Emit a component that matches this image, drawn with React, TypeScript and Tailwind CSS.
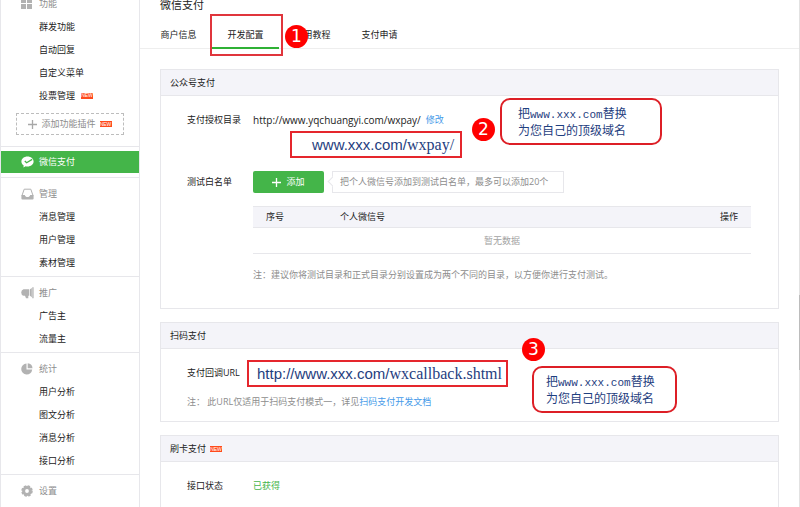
import React from "react";

type NavItem = { label: string; isNew?: boolean };

type NavGroupProps = {
	title: string;
	icon: React.ReactNode;
	items: NavItem[];
	first?: boolean;
	children?: React.ReactNode;
};

const GridIcon = () => (
	<svg width="12" height="12" viewBox="0 0 12 12" fill="#b2b2b2">
		<path d="M0 1h5v4H0zM6 1h5v4H6zM0 6h5v5H0zM6 6h5v5H6z" />
	</svg>
);

const PayIcon = () => (
	<svg width="13" height="12" viewBox="0 0 13 12">
		<path d="M6.500.5C3 .5.4 2.700.4 5.500c0 1.700.9 3.100 2.300 4L2.400 11.600l2.300-1.300c.6.2 1.200.2 1.800.2 3.400 0 6.100-2.200 6.100-5S9.900.5 6.500.5z" fill="#fff" />
		<path d="M3.800 5l1.800 1.700L11.200 3.400" fill="none" stroke="#44b549" strokeWidth="1.300" />
	</svg>
);

const InboxIcon = () => (
	<svg width="13" height="12" viewBox="0 0 13 12">
		<path d="M1 7.500L3.200 1.200h6.600L12 7.500" fill="none" stroke="#b2b2b2" />
		<path d="M.4 7h3.400c.4 1.500 1.400 2 2.700 2s2.300-.5 2.700-2h3.400v3.500q0 1-1 1H1.400q-1 0-1-1z" fill="#b2b2b2" />
	</svg>
);

const HornIcon = () => (
	<svg width="13" height="12" viewBox="0 0 13 12" fill="#b2b2b2">
		<path d="M2.500 2.300h5.500v6.400H7.300v2.600H5L4 8.700H2.500Q.2 8 .2 5.500T2.500 2.300zM8.700 2.500L10.800 1v9.300L8.700 8.500zM11.300.3h1.300v11h-1.300z" />
	</svg>
);

const PieIcon = () => (
	<svg width="12" height="12" viewBox="0 0 12 12" fill="#b2b2b2">
		<path d="M5.500.5A5.500 5.500 0 1 0 11.200 6.500H5.500z" />
		<path d="M6.700.3A5.200 5.200 0 0 1 11.500 5.300H6.700z" />
	</svg>
);

const GearIcon = () => (
	<svg width="12" height="12" viewBox="0 0 12 12">
		<circle cx="6" cy="6" r="3.400" fill="none" stroke="#b2b2b2" strokeWidth="3" />
		<circle cx="6" cy="6" r="5" fill="none" stroke="#b2b2b2" strokeWidth="1.500" strokeDasharray="2.600 1.327" />
	</svg>
);

const PlusIcon = ({ color }: { color: string }) => (
	<svg width="9" height="9" viewBox="0 0 9 9" stroke={color} strokeWidth="1.300">
		<path d="M4.500 0v9M0 4.500h9" />
	</svg>
);

const NewTag = () => (
	<span className="flex h-[6px] w-[12px] items-center justify-center bg-[#ff4a1c] font-['Liberation_Sans'] text-[5px] leading-none text-white">
		NEW
	</span>
);

const NavGroup: React.FC<NavGroupProps> = ({ title, icon, items, first, children }) => {
	return (
		<section className={first ? "" : "border-t border-[#e7e7eb] pt-[5px] pb-[2px]"}>
			<h2 className="flex h-[22px] items-center pl-5 text-[#8d8d8d]">
				<span className="w-[18px]">{icon}</span>
				{title}
			</h2>
			<ul>
				{items.map((item) => (
					<li key={item.label} className="flex h-[23px] items-center gap-[6px] pl-[38px]">
						<a href="#">{item.label}</a>
						{item.isNew && <NewTag />}
					</li>
				))}
			</ul>
			{children}
		</section>
	);
};

const Sidebar = () => {
	return (
		<nav className="w-[140px] shrink-0 border-x border-[#e7e7eb]">
			<NavGroup
				first
				title="功能"
				icon={<GridIcon />}
				items={[{ label: "群发功能" }, { label: "自动回复" }, { label: "自定义菜单" }, { label: "投票管理", isNew: true }]}
			>
				<button className="mt-[6px] mb-[11px] ml-[15px] flex h-[22px] w-[108px] items-center justify-center gap-1 border border-dashed border-[#bdbdbd] text-[#8d8d8d]">
					<PlusIcon color="#a8a8a8" />
					添加功能插件
					<NewTag />
				</button>
			</NavGroup>
			<div className="border-t border-[#e7e7eb] py-1">
				<a href="#" className="flex h-[22px] items-center bg-[#44b549] pl-5 text-white">
					<span className="w-[18px]">
						<PayIcon />
					</span>
					微信支付
				</a>
			</div>
			<NavGroup title="管理" icon={<InboxIcon />} items={[{ label: "消息管理" }, { label: "用户管理" }, { label: "素材管理" }]} />
			<NavGroup title="推广" icon={<HornIcon />} items={[{ label: "广告主" }, { label: "流量主" }]} />
			<NavGroup
				title="统计"
				icon={<PieIcon />}
				items={[{ label: "用户分析" }, { label: "图文分析" }, { label: "消息分析" }, { label: "接口分析" }]}
			/>
			<NavGroup title="设置" icon={<GearIcon />} items={[]} />
		</nav>
	);
};

const StepBadge = ({ step, className }: { step: number; className: string }) => (
	<span
		className={`absolute z-10 flex size-[23px] items-center justify-center rounded-full bg-[#ff0000] font-['DejaVu_Sans'] text-[17px] leading-none text-white ${className}`}
	>
		{step}
	</span>
);

const Callout = ({ className }: { className: string }) => (
	<p
		className={`absolute z-10 h-[47px] rounded-[10px] border-2 border-[#dd1f26] pt-[5px] text-[12px] leading-[17px] whitespace-nowrap text-[#1f4080] ${className}`}
	>
		把<span className="font-['Liberation_Mono'] text-[11px] leading-none">www.xxx.com</span>替换
		<br />
		为您自己的顶级域名
	</p>
);

const UrlMark = ({ host, path, className }: { host: string; path: string; className: string }) => (
	<p
		className={`absolute z-10 h-[27px] border-2 border-[#e5262d] bg-white leading-[23px] whitespace-nowrap text-[#1f4080] ${className}`}
	>
		<span className="font-['Liberation_Sans'] text-[15px]">{host}</span>
		<span className="font-['Liberation_Serif'] text-[16px]">{path}</span>
	</p>
);

const Panel = ({ title, isNew, className, children }: { title: string; isNew?: boolean; className: string; children: React.ReactNode }) => (
	<section className={`relative border border-[#e7e7eb] ${className}`}>
		<h3 className="flex h-[26px] items-center gap-1 border-b border-[#e7e7eb] bg-[#f4f4f9] pt-px pl-[9px]">
			{title}
			{isNew && <NewTag />}
		</h3>
		{children}
	</section>
);

const tabs = ["商户信息", "开发配置", "使用教程", "支付申请"];

const Main = () => {
	return (
		<main className="flex flex-1 flex-col">
			<h1 className="flex h-[23px] items-center pt-[2px] pl-5 text-[11px]">微信支付</h1>
			<div className="relative border-b border-[#eeeeee] pl-[5px]">
				<ul className="flex">
					{tabs.map((tab) => (
						<li key={tab} className="w-[67px]">
							<a
								href="#"
								className={
									tab === "开发配置"
										? "-mb-px flex h-[33px] items-center justify-center border-b-2 border-[#2fb135] pt-[7px]"
										: "flex h-8 items-center justify-center pt-[6px]"
								}
							>
								{tab}
							</a>
						</li>
					))}
				</ul>
				<div className="absolute -top-[2px] left-[70px] h-[42px] w-[73px] border-2 border-[#e0353c]" />
				<StepBadge step={1} className="top-[9px] left-[145px]" />
			</div>

			<div className="mt-5 mr-[21px] ml-5 flex flex-1 flex-col gap-[13px]">
				<Panel title="公众号支付" className="h-[240px]">
					<dl className="grid grid-cols-[66px_1fr] pt-[14px] pr-[27px] pl-[26px]">
						<dt className="h-5 leading-5">支付授权目录</dt>
						<dd className="flex gap-[5px] leading-5">
							<span className="text-[10px]">http://www.yqchuangyi.com/wxpay/</span>
							<a href="#" className="text-[#459ae9]">
								修改
							</a>
						</dd>
						<dt className="mt-[41px] leading-[22px]">测试白名单</dt>
						<dd className="mt-[41px]">
							<div className="flex gap-2">
								<button className="flex h-[22px] w-[71px] items-center justify-center gap-[5px] rounded-[2px] bg-[#44b549] text-white">
									<PlusIcon color="#fff" />
									添加
								</button>
								<div className="relative h-[22px] w-[232px] border border-[#e7e7eb] px-[7px] leading-5 whitespace-nowrap text-[#8d8d8d]">
									把个人微信号添加到测试白名单，最多可以添加20个
									<span className="absolute top-[6px] -left-1 size-[7px] rotate-45 border-b border-l border-[#e7e7eb] bg-white" />
								</div>
							</div>
							<table className="mt-[13px] w-full border-collapse">
								<thead>
									<tr className="h-[21px] border-y border-[#e7e7eb] bg-[#f4f4f9] text-left">
										<th className="w-[74px] pl-[13px] font-normal">序号</th>
										<th className="pl-[13px] font-normal">个人微信号</th>
										<th className="pr-[13px] text-right font-normal">操作</th>
									</tr>
								</thead>
								<tbody>
									<tr className="h-[26px] border-b border-[#e7e7eb]">
										<td colSpan={3} className="text-center text-[#a3a3a3]">
											暂无数据
										</td>
									</tr>
								</tbody>
							</table>
							<p className="mt-[11px] leading-5 text-[#8d8d8d]">注：建议你将测试目录和正式目录分别设置成为两个不同的目录，以方便你进行支付测试。</p>
						</dd>
					</dl>
					<UrlMark host="www.xxx.com/" path="wxpay/" className="top-[61px] left-[129px] w-[172px] pl-5" />
					<StepBadge step={2} className="top-[48px] left-[311px]" />
					<Callout className="top-[28px] left-[339px] w-[162px] pl-4" />
				</Panel>

				<Panel title="扫码支付" className="h-[100px]">
					<div className="pt-[14px] pl-[26px] leading-5">
						<p>支付回调URL</p>
						<p className="mt-[9px] text-[#8d8d8d]">
							注： 此URL仅适用于扫码支付模式一，详见
							<a href="#" className="text-[#459ae9]">
								扫码支付开发文档
							</a>
						</p>
					</div>
					<UrlMark host="http://www.xxx.com/" path="wxcallback.shtml" className="top-[37px] left-[86px] w-[261px] pl-2" />
					<StepBadge step={3} className="top-[15px] left-[361px]" />
					<Callout className="top-[43px] left-[371px] w-[145px] pl-3" />
				</Panel>

				<Panel title="刷卡支付" isNew className="flex-1 border-b-0">
					<dl className="grid grid-cols-[66px_1fr] pt-[14px] pl-[26px] leading-5">
						<dt>接口状态</dt>
						<dd className="text-[#44b549]">已获得</dd>
					</dl>
				</Panel>
			</div>
		</main>
	);
};

const App = () => {
	return (
		<div className="relative flex min-h-screen flex-col overflow-hidden bg-white font-['Open_Sans','Noto_Sans_CJK_SC',sans-serif] text-[9px] text-[#222222]">
			<div className="-mt-[7px] flex flex-1">
				<Sidebar />
				<Main />
			</div>
			{/* scroll rail and thumb */}
			<div className="absolute inset-y-0 right-0 w-px bg-[#e2e2e2]">
				<div className="mt-[295px] h-[75px] bg-[#bcbcbc]" />
			</div>
		</div>
	);
};

export default App;
